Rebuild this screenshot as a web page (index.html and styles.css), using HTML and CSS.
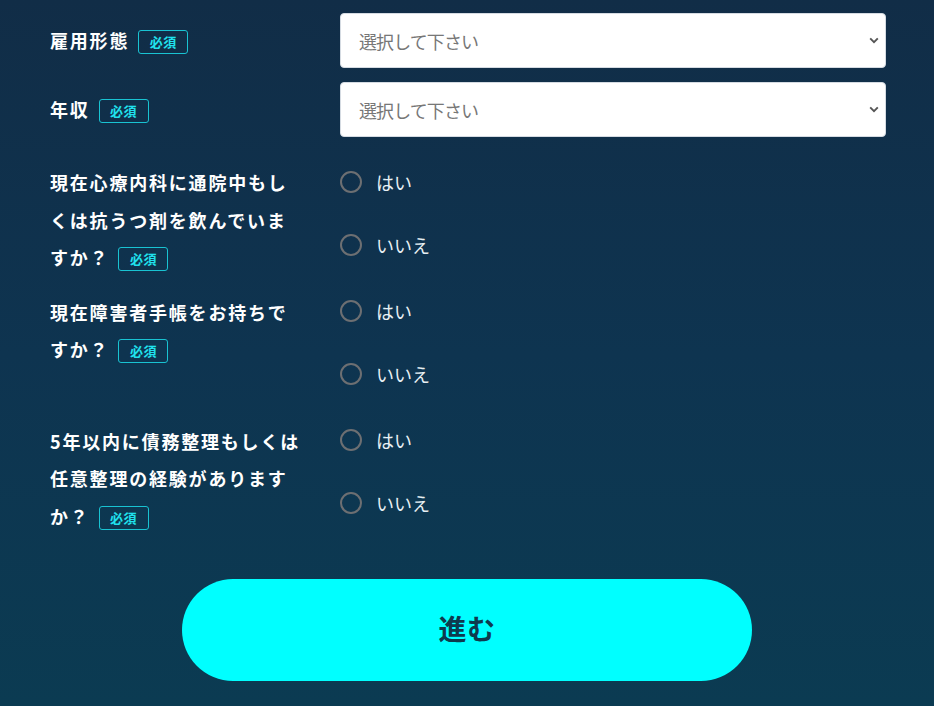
FILE: index.html
```html
<!DOCTYPE html>
<html lang="ja">
<head>
<meta charset="utf-8">
<title>フォーム</title>
<link rel="stylesheet" href="styles.css">
</head>
<body>
<form class="form">
  <div class="row row-select">
    <div class="label"><span class="label-text">雇用形態<span class="badge">必須</span></span></div>
    <div class="select-wrap">
      <select class="select"><option>選択して下さい</option></select>
      <svg class="chevron" width="10" height="7" viewBox="0 0 10 7"><path d="M1.2 1.3 L5 5.1 L8.8 1.3" fill="none" stroke="#555" stroke-width="1.9"/></svg>
    </div>
  </div>
  <div class="row row-select last-select">
    <div class="label"><span class="label-text">年収<span class="badge">必須</span></span></div>
    <div class="select-wrap">
      <select class="select"><option>選択して下さい</option></select>
      <svg class="chevron" width="10" height="7" viewBox="0 0 10 7"><path d="M1.2 1.3 L5 5.1 L8.8 1.3" fill="none" stroke="#555" stroke-width="1.9"/></svg>
    </div>
  </div>

  <div class="row row-radio">
    <div class="label label-q"><span class="label-text">現在心療内科に通院中もしくは抗うつ剤を飲んでいますか？<span class="badge">必須</span></span></div>
    <div class="options">
      <label class="option"><span class="radio"></span>はい</label>
      <label class="option"><span class="radio"></span>いいえ</label>
    </div>
  </div>
  <div class="row row-radio">
    <div class="label label-q"><span class="label-text">現在障害者手帳をお持ちですか？<span class="badge">必須</span></span></div>
    <div class="options">
      <label class="option"><span class="radio"></span>はい</label>
      <label class="option"><span class="radio"></span>いいえ</label>
    </div>
  </div>
  <div class="row row-radio">
    <div class="label label-q"><span class="label-text">5年以内に債務整理もしくは任意整理の経験がありますか？<span class="badge">必須</span></span></div>
    <div class="options">
      <label class="option"><span class="radio"></span>はい</label>
      <label class="option"><span class="radio"></span>いいえ</label>
    </div>
  </div>

  <div class="submit-row">
    <button type="button" class="submit">進む</button>
  </div>
</form>
</body>
</html>
```

FILE: styles.css
```css
html, body {
  margin: 0;
  padding: 0;
}
body {
  width: 934px;
  height: 706px;
  overflow: hidden;
  background: linear-gradient(180deg, #112d47 0%, #0e3450 50%, #0b3b52 100%);
  font-family: "Noto Sans CJK JP", "Noto Sans", sans-serif;
  color: #ffffff;
}
.form {
  padding: 13px 48px 0 50px;
}
.row {
  display: flex;
}
.label {
  width: 290px;
  flex: none;
}
.label-text {
  display: block;
  width: 254px;
  font-size: 18px;
  font-weight: 700;
  letter-spacing: 0.1em;
  line-height: 37.5px;
  color: #ffffff;
}
.badge {
  display: inline-block;
  box-sizing: border-box;
  width: 50px;
  height: 24px;
  margin-left: 9px;
  border: 1px solid #19c3d2;
  border-radius: 3px;
  font-size: 13px;
  font-weight: 700;
  line-height: 21px;
  letter-spacing: 0.04em;
  text-align: center;
  color: #20e2ee;
  vertical-align: 1px;
}
.row-select {
  align-items: center;
  height: 55px;
  margin-bottom: 14px;
}
.row-select.last-select {
  margin-bottom: 13px;
}
.select-wrap {
  position: relative;
  flex: 1;
  height: 55px;
}
.select {
  -webkit-appearance: none;
  appearance: none;
  box-sizing: border-box;
  width: 100%;
  height: 55px;
  padding: 0 30px 0 18px;
  border: 1px solid #d5dbe2;
  border-radius: 4px;
  background: #ffffff;
  font-family: "Noto Sans CJK JP", "Noto Sans", sans-serif;
  font-size: 18px;
  letter-spacing: -0.9px;
  color: #777777;
  outline: none;
}
.chevron {
  position: absolute;
  right: 7px;
  top: 24px;
}
.row-radio {
  margin-bottom: 3px;
}
.label-q {
  padding-top: 14px;
}
.options {
  display: flex;
  flex-direction: column;
}
.option {
  display: flex;
  align-items: center;
  height: 63px;
  font-size: 18px;
  color: #e8f0f4;
}
.radio {
  box-sizing: border-box;
  width: 22px;
  height: 22px;
  margin-right: 14px;
  border: 2px solid #6d6f72;
  border-radius: 50%;
}
.submit-row {
  display: flex;
  justify-content: center;
  margin-top: 44px;
  margin-left: -2px;
}
.submit {
  width: 570px;
  height: 102px;
  padding: 0 0 5px 0;
  border: none;
  border-radius: 51px;
  background: #00ffff;
  font-family: "Noto Sans CJK JP", "Noto Sans", sans-serif;
  font-size: 28px;
  font-weight: 700;
  color: #0e3a4e;
  letter-spacing: 0.02em;
}
```
